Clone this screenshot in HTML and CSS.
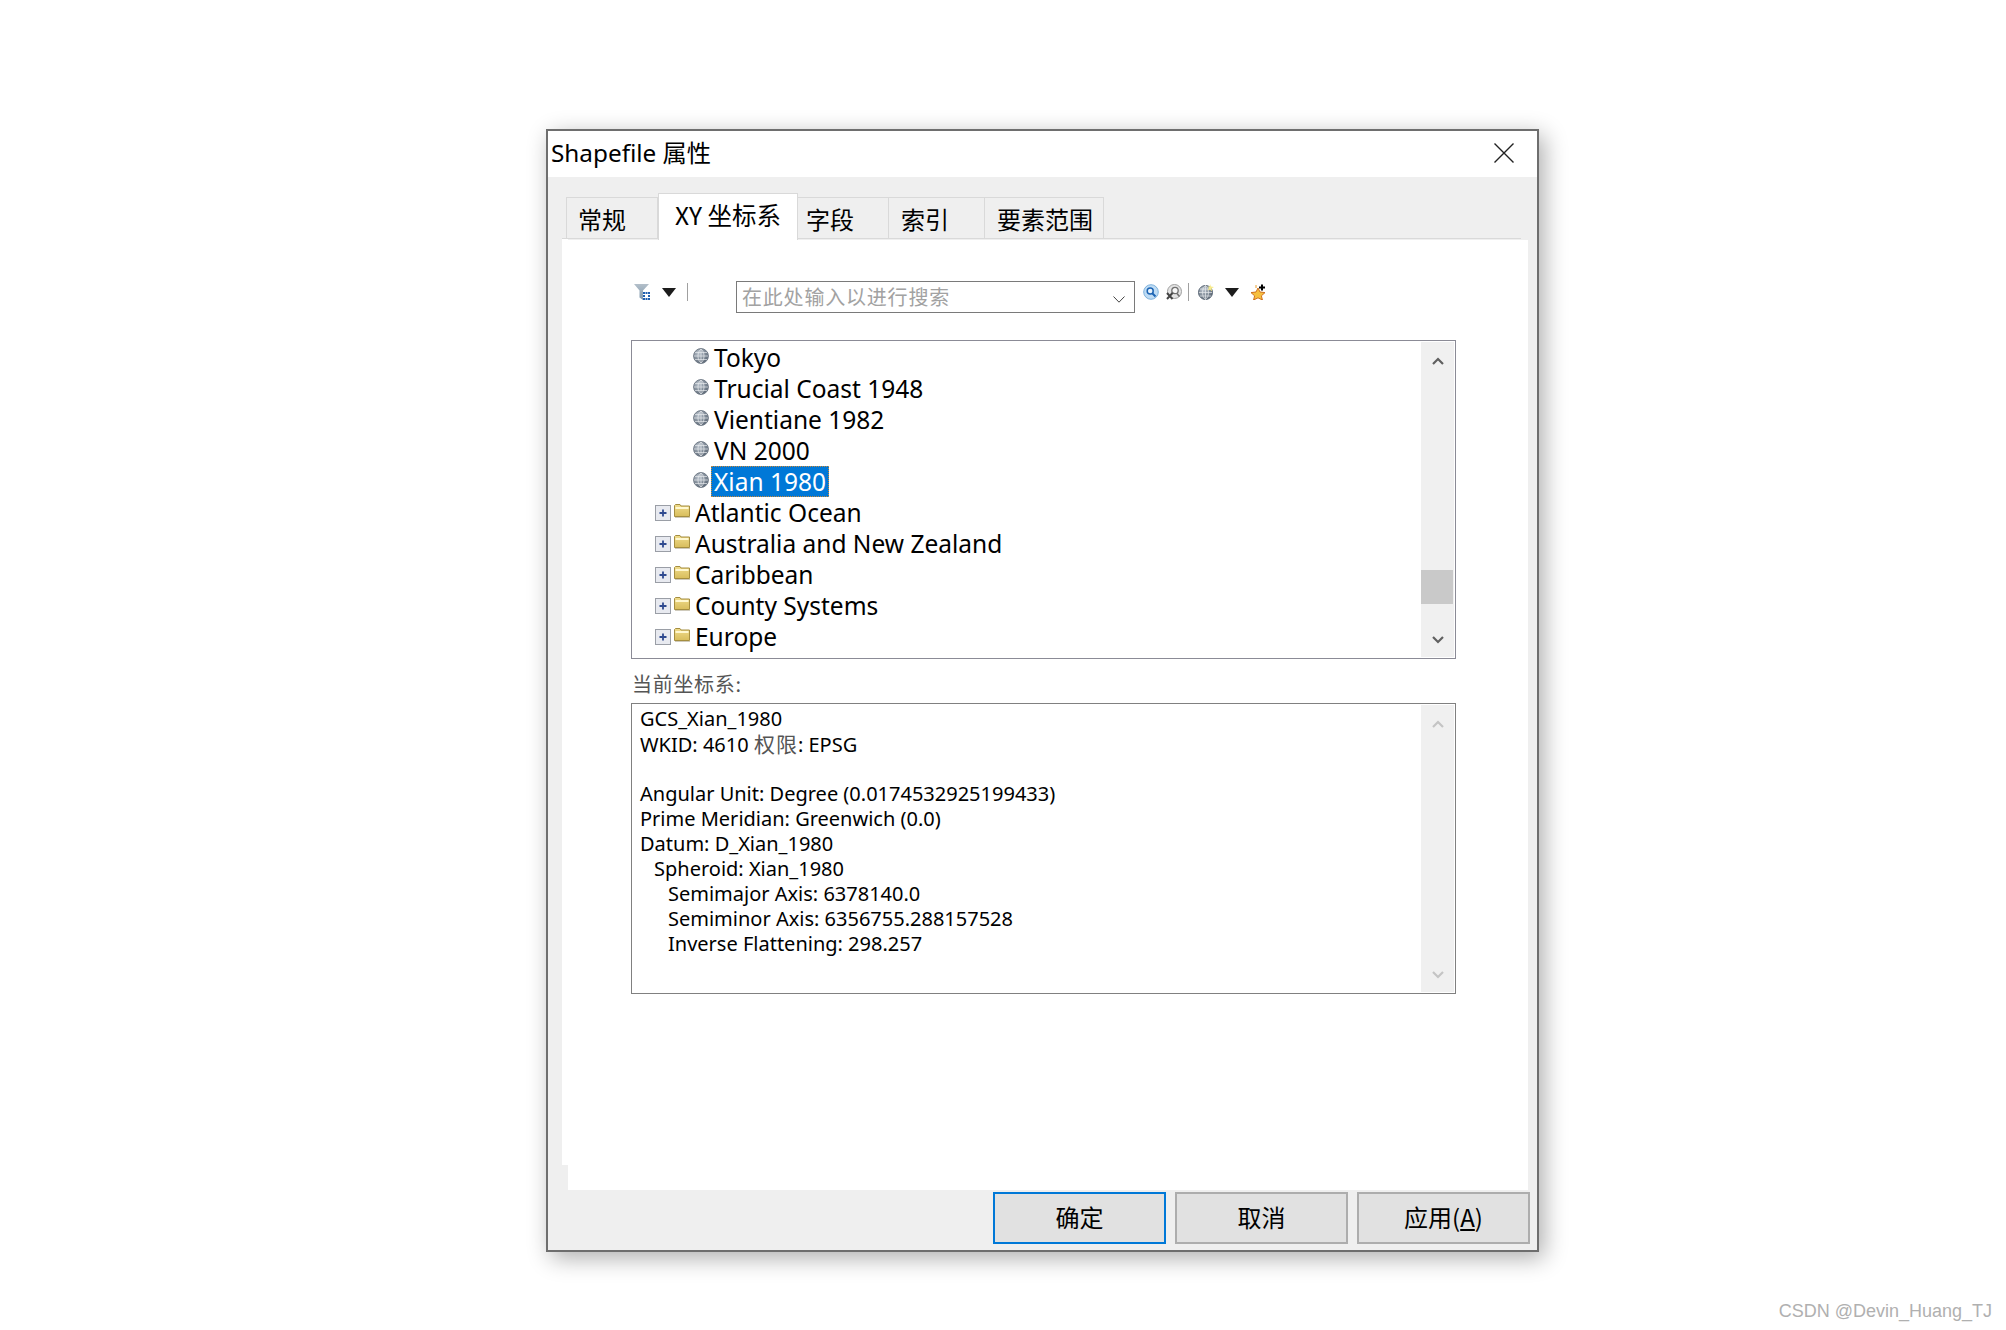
FILE: index.html
```html
<!DOCTYPE html>
<html lang="zh-CN">
<head>
<meta charset="utf-8">
<title>Shapefile 属性</title>
<link rel="stylesheet" href="styles.css">
</head>
<body>
<svg class="defs" width="0" height="0" aria-hidden="true">
  <defs>
    <radialGradient id="gb" cx="35%" cy="30%" r="80%"><stop offset="0" stop-color="#b9c2cc"/><stop offset="1" stop-color="#55616f"/></radialGradient>
    <linearGradient id="fd" x1="0" y1="0" x2="0" y2="1"><stop offset="0" stop-color="#f0dc8c"/><stop offset="1" stop-color="#d8bd5c"/></linearGradient>
    <linearGradient id="fn" x1="0" y1="0" x2="0" y2="1"><stop offset="0" stop-color="#b4c0ca"/><stop offset="1" stop-color="#7d97ad"/></linearGradient>
    <symbol id="globe" viewBox="0 0 16 16">
      <circle cx="8" cy="8" r="7.400" fill="url(#gb)" stroke="#737d89" stroke-width="1"/>
      <path d="M1 8h14M2 4.500h12M2 11.500h12M8 1v14M8 1C4 4 4 12 8 15M8 1c4 3 4 11 0 14" fill="none" stroke="#e6e9ec" stroke-width=".7"/>
    </symbol>
    <symbol id="folder" viewBox="0 0 16 14">
      <path d="M.5 12.500V1.500L1.500.5h4.500l1 1.500h8.500v10.500z" fill="url(#fd)" stroke="#a58e40"/>
      <path d="M1.500 4h13" stroke="#fff8d0" stroke-width="2"/>
      <path d="M1 13.500h15" stroke="#cfcabb"/>
    </symbol>
    <symbol id="expander" viewBox="0 0 16 16">
      <rect x=".5" y=".5" width="15" height="15" fill="#e8eaf0" stroke="#9a9ea6"/>
      <path d="M8 4.500v7M4.500 8h7" stroke="#2f4a8f" stroke-width="1.800"/>
    </symbol>
    <symbol id="filter" viewBox="0 0 16 16">
      <path d="M0 0h15L9 6.500V16L5.500 13.500V6.500z" fill="url(#fn)"/>
      <path d="M9 8h2v2H9zM11.500 8h2v2h-2zM14 8h2v2h-2zM9 11h2v2H9zM14 11h2v2h-2zM9 14h2v2H9zM11.500 14h2v2h-2zM14 14h2v2h-2z" fill="#1f5fb0"/>
    </symbol>
    <symbol id="search" viewBox="0 0 16 16">
      <circle cx="8" cy="8" r="7.300" fill="#bfdcf4" stroke="#7fb2dc"/>
      <circle cx="7.200" cy="7" r="3" fill="#e8f3fb" stroke="#1c64b4" stroke-width="1.500"/>
      <path d="M9.500 9.500l3 3" stroke="#1c64b4" stroke-width="2"/>
    </symbol>
    <symbol id="clear" viewBox="0 0 16 16">
      <circle cx="8.500" cy="7.500" r="7" fill="#e4e4e4" stroke="#a0a0a0"/>
      <circle cx="9" cy="6.500" r="3.200" fill="#f8f8f8" stroke="#707070" stroke-width="1.300"/>
      <path d="M11 9.500l2.500 3" stroke="#707070" stroke-width="1.600"/>
      <path d="M1 9l5.500 6M6.500 9L1 15" stroke="#444" stroke-width="2"/>
    </symbol>
    <symbol id="newglobe" viewBox="0 0 16 16">
      <circle cx="7.500" cy="8.500" r="7" fill="url(#gb)" stroke="#5c6876"/>
      <path d="M1 8.500h13M2 5h11M2 12h11M7.500 1.500v14M7.500 1.500c-4 3-4 11 0 14M7.500 1.500c4 3 4 11 0 14" fill="none" stroke="#e6e9ec" stroke-width=".7"/>
      <path d="M12 0l1 2.500L16 3l-2.500 1.500L14 7.500l-2-2-2.500 1L11 4 9.500 2.500l2 .2z" fill="#f8ec8c"/>
    </symbol>
    <symbol id="star" viewBox="0 0 16 16">
      <path d="M7 4l2 4 5 .6-3.600 3.200 1 4.200L7 13.800 2.600 16l1-4.200L0 8.600 5 8z" fill="#f6c040" stroke="#d0701c"/>
      <path d="M11 .500v6M8 3.500h6" stroke="#000" stroke-width="2"/>
      <path d="M5 1v3" stroke="#e8a030" stroke-width="1"/>
    </symbol>
    <symbol id="up" viewBox="0 0 12 8"><path d="M1 7l5-5 5 5" fill="none" stroke="currentColor" stroke-width="2.200"/></symbol>
    <symbol id="down" viewBox="0 0 12 8"><path d="M1 1l5 5 5-5" fill="none" stroke="currentColor" stroke-width="2.200"/></symbol>
  </defs>
</svg>

<main class="window">
  <header class="titlebar">
    <span class="title">Shapefile 属性</span>
    <svg class="close" viewBox="0 0 20 20"><path d="M.5 .5l19 19M19.500 .5l-19 19" stroke="#222" stroke-width="1.400" fill="none"/></svg>
  </header>

  <nav class="tabs">
    <span class="tab tab-general">常规</span>
    <span class="tab tab-active">XY 坐标系</span>
    <span class="tab tab-fields">字段</span>
    <span class="tab tab-index">索引</span>
    <span class="tab tab-extent">要素范围</span>
  </nav>

  <section class="page">
    <div class="toolbar">
      <svg class="ico ico-filter"><use href="#filter"/></svg>
      <i class="drop drop-left"></i>
      <i class="sep sep-left"></i>
      <div class="combo">
        <span class="placeholder">在此处输入以进行搜索</span>
        <svg class="combo-arrow" viewBox="0 0 12 7"><path d="M.5 .5L6 6.200 11.500 .5" fill="none" stroke="#444" stroke-width="1"/></svg>
      </div>
      <svg class="ico ico-search"><use href="#search"/></svg>
      <svg class="ico ico-clear"><use href="#clear"/></svg>
      <i class="sep sep-right"></i>
      <svg class="ico ico-globe"><use href="#newglobe"/></svg>
      <i class="drop drop-right"></i>
      <svg class="ico ico-star"><use href="#star"/></svg>
    </div>

    <div class="box tree">
      <ul class="rows">
        <li class="row leaf"><svg class="globe"><use href="#globe"/></svg><span class="label">Tokyo</span></li>
        <li class="row leaf"><svg class="globe"><use href="#globe"/></svg><span class="label">Trucial Coast 1948</span></li>
        <li class="row leaf"><svg class="globe"><use href="#globe"/></svg><span class="label">Vientiane 1982</span></li>
        <li class="row leaf"><svg class="globe"><use href="#globe"/></svg><span class="label">VN 2000</span></li>
        <li class="row leaf"><svg class="globe"><use href="#globe"/></svg><span class="label selected">Xian 1980</span></li>
        <li class="row group"><svg class="expander"><use href="#expander"/></svg><svg class="folder"><use href="#folder"/></svg><span class="label">Atlantic Ocean</span></li>
        <li class="row group"><svg class="expander"><use href="#expander"/></svg><svg class="folder"><use href="#folder"/></svg><span class="label">Australia and New Zealand</span></li>
        <li class="row group"><svg class="expander"><use href="#expander"/></svg><svg class="folder"><use href="#folder"/></svg><span class="label">Caribbean</span></li>
        <li class="row group"><svg class="expander"><use href="#expander"/></svg><svg class="folder"><use href="#folder"/></svg><span class="label">County Systems</span></li>
        <li class="row group"><svg class="expander"><use href="#expander"/></svg><svg class="folder"><use href="#folder"/></svg><span class="label">Europe</span></li>
      </ul>
      <div class="scrollbar">
        <svg class="chev"><use href="#up"/></svg>
        <div class="track"><div class="thumb"></div></div>
        <svg class="chev"><use href="#down"/></svg>
      </div>
    </div>

    <div class="current-label">当前坐标系:</div>

    <div class="box details">
      <div class="detail-text">
        <div class="line">GCS_Xian_1980</div>
        <div class="line">WKID: 4610 <span class="cjk">权限</span>: EPSG</div>
        <div class="line">&nbsp;</div>
        <div class="line">Angular Unit: Degree (0.0174532925199433)</div>
        <div class="line">Prime Meridian: Greenwich (0.0)</div>
        <div class="line">Datum: D_Xian_1980</div>
        <div class="line indent-1">Spheroid: Xian_1980</div>
        <div class="line indent-2">Semimajor Axis: 6378140.0</div>
        <div class="line indent-2">Semiminor Axis: 6356755.288157528</div>
        <div class="line indent-2">Inverse Flattening: 298.257</div>
      </div>
      <div class="scrollbar disabled">
        <svg class="chev"><use href="#up"/></svg>
        <div class="track"></div>
        <svg class="chev"><use href="#down"/></svg>
      </div>
    </div>
  </section>

  <footer class="buttons">
    <span class="btn btn-default">确定</span>
    <span class="btn">取消</span>
    <span class="btn">应用(<u>A</u>)</span>
  </footer>
</main>

<div class="watermark">CSDN @Devin_Huang_TJ</div>
</body>
</html>
```
FILE: styles.css
```css
* { box-sizing: border-box; }
html, body { margin: 0; padding: 0; background: #fff; }
body {
  position: relative;
  width: 2006px;
  height: 1330px;
  overflow: hidden;
  font-family: "Noto Sans", "Noto Sans CJK SC", sans-serif;
  color: #000;
}
.defs { position: absolute; }

.window {
  margin: 129px 0 0 546px;
  width: 993px;
  height: 1123px;
  border: 2px solid #6e6e6e;
  background: #efefef;
  box-shadow: 5px 6px 22px rgba(0, 0, 0, .32);
  display: flex;
  flex-direction: column;
}

.titlebar {
  height: 46px;
  flex: none;
  background: #fff;
  display: flex;
  align-items: center;
  justify-content: space-between;
  padding: 0 23px 2px 3px;
}
.title { font-size: 24.3px; line-height: 32px; }
.close { width: 20px; height: 20px; }

.tabs {
  height: 63px;
  flex: none;
  display: flex;
  align-items: flex-end;
  padding: 0 0 1px 18px;
}
.tab {
  height: 42px;
  background: #efefef;
  border: 1px solid #d9d9d9;
  border-left: 0;
  font-family: "Noto Sans CJK SC", sans-serif;
  font-size: 24px;
  line-height: 42px;
  white-space: nowrap;
}
.tab-general { width: 92px; border-left: 1px solid #d9d9d9; padding-left: 11px; }
.tab-active {
  width: 140px;
  height: 47px;
  margin-bottom: -1px;
  background: #fff;
  border-top: 1px solid #d9d9d9;
  border-bottom: 0;
  border-left: 1px solid #d9d9d9;
  font-size: 24.5px;
  line-height: 41px;
  padding-left: 16px;
  position: relative;
  z-index: 1;
}
.tab-fields { width: 91px; padding-left: 8px; }
.tab-index { width: 96px; padding-left: 12px; }
.tab-extent { width: 119px; padding-left: 12px; }

.page {
  position: relative;
  width: 960px;
  height: 950px;
  margin-left: 20px;
  flex: none;
  background: #fff;
  padding: 41px 0 0 63px;
}
.page::before {
  content: "";
  position: absolute;
  left: -6px;
  top: -2px;
  width: 6px;
  height: 926px;
  background: #fff;
  border-top: 1px solid #d9d9d9;
}
.page::after {
  content: "";
  position: absolute;
  left: 0;
  top: -2px;
  width: 953px;
  height: 1px;
  background: #d9d9d9;
}

.toolbar {
  width: 825px;
  height: 32px;
  display: flex;
  align-items: flex-start;
  padding-top: 3px;
}
.ico { width: 16px; height: 16px; flex: none; }
.ico-filter { margin-left: 3px; }
.drop {
  display: block;
  flex: none;
  width: 0;
  height: 0;
  border-left: 7px solid transparent;
  border-right: 7px solid transparent;
  border-top: 9px solid #1c1c1c;
  margin-top: 4px;
}
.drop-left { margin-left: 12px; }
.drop-right { margin-left: 11px; }
.sep { display: block; flex: none; width: 1px; height: 18px; background: #a0a0a0; margin-top: -1px; }
.sep-left { margin-left: 11px; }
.sep-right { margin-left: 6px; }
.combo {
  width: 399px;
  height: 32px;
  margin: -3px 8px 0 48px;
  flex: none;
  border: 1px solid #7a7a7a;
  display: flex;
  align-items: center;
  justify-content: space-between;
  padding: 0 9px 0 5px;
}
.placeholder {
  font-family: "Noto Sans CJK SC", sans-serif;
  font-size: 20px;
  letter-spacing: .8px;
  color: #a2a2a2;
  white-space: nowrap;
  line-height: 30px;
}
.combo-arrow { width: 12px; height: 7px; margin-top: 4px; }
.ico-clear { margin-left: 7px; }
.ico-globe { margin-left: 9px; }
.ico-star { margin-left: 12px; }

.box {
  width: 825px;
  display: flex;
  justify-content: space-between;
  background: #fff;
  padding: 1px;
}
.tree {
  height: 319px;
  margin-top: 27px;
  border: 1px solid #8b8b96;
}
.details {
  height: 291px;
  border: 1px solid #808080;
}
.rows {
  list-style: none;
  margin: 0;
  padding: 0;
  font-size: 24.5px;
}
.row {
  height: 31px;
  display: flex;
  align-items: stretch;
}
.leaf { padding-left: 60px; }
.group { padding-left: 22px; }
.globe { width: 16px; height: 16px; margin: 6px 2px 0 0; flex: none; }
.expander { width: 16px; height: 16px; margin: 8px 3px 0 0; flex: none; }
.folder { width: 16px; height: 14px; margin: 7px 2px 0 0; flex: none; }
.label {
  border: 1px dotted transparent;
  padding: 0 2px;
  line-height: 29px;
  white-space: nowrap;
}
.selected {
  background: #0078d7;
  color: #fff;
  border-color: #c98a3c;
}

.scrollbar {
  width: 33px;
  flex: none;
  background: #f0f0f0;
  display: flex;
  flex-direction: column;
  align-items: center;
  color: #606060;
}
.chev { width: 12px; height: 8px; flex: none; margin: 15px 0 13px; }
.disabled { color: #c4c4c4; }
.track { flex: 1; width: 100%; position: relative; }
.thumb {
  position: absolute;
  left: 0;
  bottom: 17px;
  width: 32px;
  height: 34px;
  background: #c9c9c9;
}

.current-label {
  height: 44px;
  padding: 13px 0 0 1px;
  font-family: "Noto Sans CJK SC", sans-serif;
  font-size: 20px;
  letter-spacing: .7px;
  line-height: 24px;
  color: #555;
}

.detail-text {
  padding: 1px 0 0 7px;
  font-size: 20px;
  line-height: 25px;
}
.line { height: 25px; white-space: nowrap; }
.cjk {
  font-family: "Noto Sans CJK SC", sans-serif;
  font-size: 21px;
  letter-spacing: 1px;
  color: #555;
}
.indent-1 { padding-left: 14px; }
.indent-2 { padding-left: 28px; }

.buttons {
  flex: 1;
  display: flex;
  justify-content: flex-end;
  gap: 9px;
  padding: 2px 7px 0 0;
}
.btn {
  width: 173px;
  height: 52px;
  background: #e1e1e1;
  border: 2px solid #adadad;
  font-family: "Noto Sans CJK SC", sans-serif;
  font-size: 24px;
  line-height: 46px;
  text-align: center;
}
.btn-default { border-color: #0078d7; }

.watermark {
  position: absolute;
  right: 14px;
  bottom: 8px;
  font-family: "Liberation Sans", sans-serif;
  font-size: 18px;
  line-height: 22px;
  color: #b0b0b0;
}
```
